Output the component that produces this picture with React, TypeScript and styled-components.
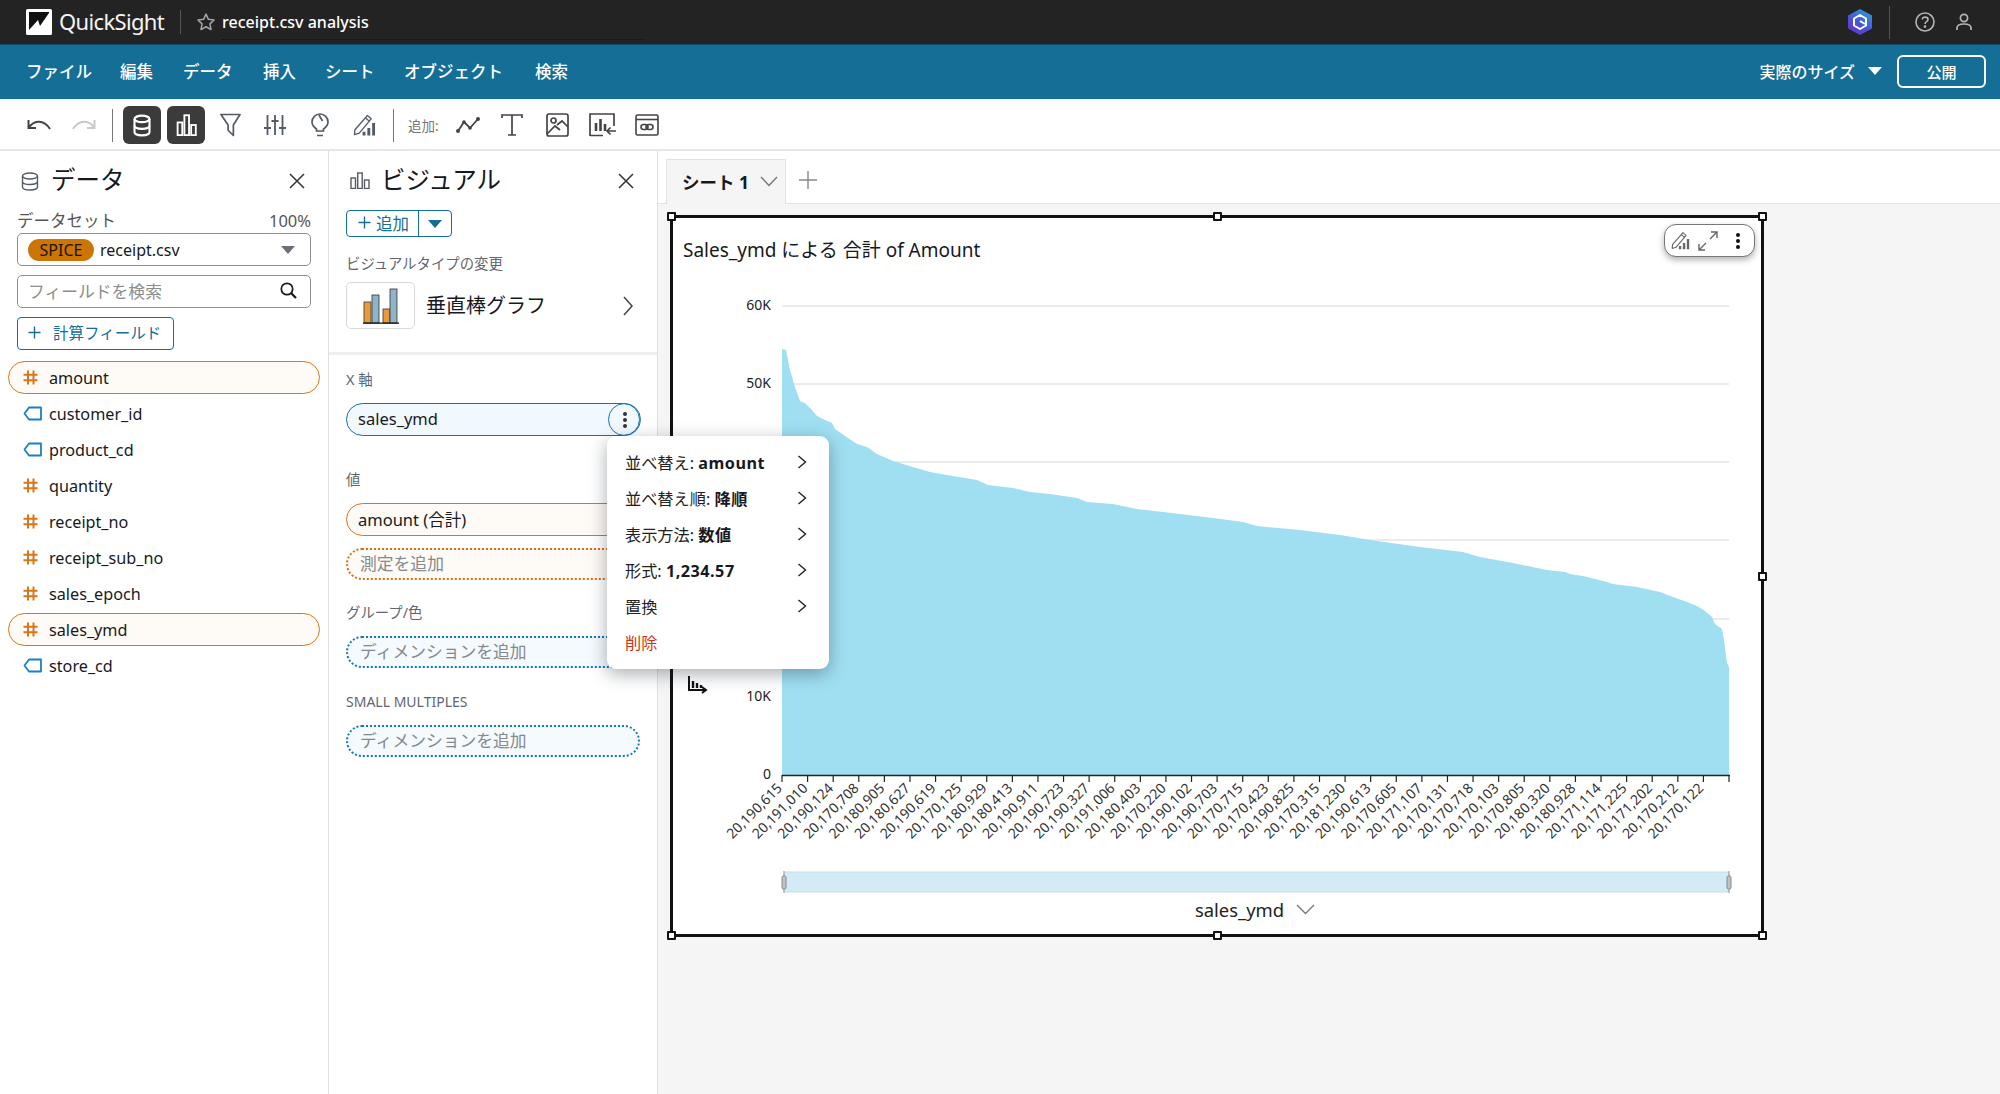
import styled, { createGlobalStyle } from 'styled-components'

const GlobalStyle = createGlobalStyle`
    html, body {
        margin: 0;
        padding: 0;
        height: 100%;
        background: #fff;
    }
    * {
        box-sizing: border-box;
    }
    body {
        font-family: "Noto Sans", "Noto Sans CJK JP", sans-serif;
        color: #16191f;
        overflow: hidden;
    }
`

const PageWrapper = styled.div`
    display: flex;
    flex-direction: column;
    width: 2000px;
    height: 1094px;
    overflow: hidden;
`

/* top black bar */
const TopBar = styled.div`
    display: flex;
    align-items: center;
    height: 45px;
    flex: none;
    padding-left: 26px;
    background: #232323;
    border-bottom: 1px solid #0f4f6d;
    color: #fff;
`

const Brand = styled.span`
    margin-left: 7px;
    padding-bottom: 2px;
    font-size: 22px;
    letter-spacing: -0.65px;
    color: #f4f4f4;
`

const TopDivider = styled.span`
    width: 1px;
    height: ${({ $h }: { $h: number }) => $h}px;
    background: #555;
`

const AnalysisName = styled.div`
    display: flex;
    align-items: center;
    width: 422px;
    height: 36px;
    margin: 0 0 0 6px;
    border-bottom: 1px dotted #111;
    font-size: 16px;
    font-weight: 500;
`

const TopRight = styled.div`
    display: flex;
    align-items: center;
    margin-left: auto;
    padding-right: 28px;
`

/* blue menu bar */
const MenuBar = styled.div`
    display: flex;
    align-items: center;
    height: 54px;
    flex: none;
    padding: 0 14px 2px 26px;
    background: #146e96;
    color: #fff;
`

const MenuItem = styled.span`
    width: ${({ $w }: { $w: number }) => $w}px;
    font-size: 16.5px;
    font-weight: 500;
`

const SizeSelect = styled.div`
    display: flex;
    align-items: center;
    margin-left: auto;
    font-size: 16px;
    font-weight: 500;
`

const Caret = styled.span`
    width: 0;
    height: 0;
    margin-left: ${({ $ml }: { $ml?: number }) => $ml ?? 0}px;
    border-left: 7px solid transparent;
    border-right: 7px solid transparent;
    border-top: 8px solid ${({ color }) => color || '#fff'};
`

const PublishButton = styled.button`
    width: 89px;
    height: 33px;
    margin-left: 15px;
    border: 2px solid #fff;
    border-radius: 6px;
    background: transparent;
    color: #fff;
    font: 500 15px "Noto Sans", "Noto Sans CJK JP", sans-serif;
`

/* icon toolbar */
const ToolBar = styled.div`
    display: flex;
    align-items: center;
    height: 52px;
    flex: none;
    padding: 2px 0 0 27px;
    border-bottom: 2px solid #e6e6e6;
    color: #545b64;
`

const ToolSlot = styled.span`
    display: flex;
    align-items: center;
    justify-content: center;
    width: ${({ $w }: { $w: number }) => $w}px;
    height: 24px;
    margin-left: ${({ $ml }: { $ml?: number }) => $ml ?? 0}px;
`

const ToolSep = styled.span`
    width: 1px;
    height: 33px;
    background: #777;
    margin-left: ${({ $ml }: { $ml: number }) => $ml}px;
`

const ActiveTool = styled.span`
    display: flex;
    align-items: center;
    justify-content: center;
    width: 38px;
    height: 38px;
    margin-left: ${({ $ml }: { $ml: number }) => $ml}px;
    border-radius: 6px;
    background: #3b3b3b;
    color: #fff;
`

const AddLabel = styled.span`
    width: 33px;
    margin-left: 14px;
    font-size: 13.5px;
    color: #777;
    white-space: nowrap;
`

/* panels */
const Workspace = styled.div`
    display: flex;
    flex: 1;
    min-height: 0;
`

const Panel = styled.div`
    width: 329px;
    flex: none;
    border-right: 1px solid #e0e0e0;
`

const PanelHeader = styled.div`
    display: flex;
    align-items: center;
    height: ${({ $h }: { $h: number }) => $h}px;
    padding: 0 0 0 ${({ $pl }: { $pl: number }) => $pl}px;
`

const PanelTitle = styled.span`
    margin-left: ${({ $ml }: { $ml: number }) => $ml}px;
    padding-bottom: 2px;
    font-size: 24.5px;
    line-height: 30px;
    color: #16191f;
`

const CloseIcon = styled.svg`
    margin-left: auto;
    margin-right: ${({ $mr }: { $mr: number }) => $mr}px;
    flex: none;
`

const DataBody = styled.div`
    padding: 0 17px;
`

const DatasetRow = styled.div`
    display: flex;
    justify-content: space-between;
    height: 22px;
    font-size: 16.5px;
    line-height: 20px;
    color: #555;
`

const Select = styled.div`
    display: flex;
    align-items: center;
    height: 33px;
    padding: 0 15px 0 10px;
    border: 1.5px solid #8f8f8f;
    border-radius: 5px;
    font-size: 16px;
`

const SpiceBadge = styled.span`
    display: flex;
    align-items: center;
    justify-content: center;
    width: 66px;
    height: 22px;
    margin-right: 6px;
    border-radius: 11px;
    background: #cc7504;
    color: #1a1205;
    font-size: 16px;
`

const SearchBox = styled.div`
    display: flex;
    align-items: center;
    justify-content: space-between;
    height: 33px;
    margin-top: 9px;
    padding: 0 13px 2px 10px;
    border: 1.5px solid #8f8f8f;
    border-radius: 5px;
    color: #8d8d8d;
    font-size: 16.8px;
`

const CalcButton = styled.div`
    display: flex;
    align-items: center;
    width: 157px;
    height: 33px;
    margin-top: 9px;
    padding: 0 0 2px 10px;
    border: 1.5px solid #146e96;
    border-radius: 4px;
    color: #146e96;
    font-size: 15.5px;
`

const FieldList = styled.div`
    margin-top: 11px;
    padding: 0 8px;
`

const Field = styled.div<{ $selected?: boolean }>`
    display: flex;
    align-items: center;
    height: 33px;
    margin-bottom: 3px;
    padding-left: 14px;
    border: 1.5px solid ${({ $selected }) => ($selected ? '#d5771a' : 'transparent')};
    border-radius: 17px;
    background: ${({ $selected }) => ($selected ? '#fefaf5' : 'transparent')};
    font-size: 16.2px;
`

const FieldName = styled.span<{ $tag?: boolean }>`
    margin-left: ${({ $tag }) => ($tag ? 7 : 11)}px;
`

const VisualBody = styled.div`
    padding: 0 17px;
`

const AddButton = styled.div`
    display: flex;
    align-items: center;
    width: 106px;
    height: 27px;
    border: 1.5px solid #146e96;
    border-radius: 4px;
    color: #146e96;
    font-size: 16.5px;
`

const AddButtonText = styled.span`
    display: flex;
    align-items: center;
    gap: 5px;
    width: 72px;
    height: 100%;
    padding: 0 0 2px 11px;
    border-right: 1.5px solid #146e96;
`

const AddButtonCaret = styled.span`
    display: flex;
    flex: 1;
    justify-content: center;
`

const SmallLabel = styled.div<{ $top: number; $latin?: boolean }>`
    height: 18px;
    margin-top: ${({ $top }) => $top}px;
    font-size: ${({ $latin }) => ($latin ? 14 : 14.4)}px;
    line-height: 17px;
    color: #5f6670;
`

const TypeRow = styled.div`
    display: flex;
    align-items: center;
    height: 47px;
    margin-top: 9px;
    margin-bottom: 23px;
    padding-right: 6px;
    font-size: 20px;
`

const TypeName = styled.span`
    padding-bottom: 2px;
`

const TypeThumb = styled.div`
    display: flex;
    align-items: center;
    justify-content: center;
    width: 69px;
    height: 47px;
    margin-right: 11px;
    border: 1px solid #d5dbdb;
    border-radius: 5px;
`

const TypeChevron = styled.svg`
    margin-left: auto;
`

const SectionDivider = styled.div`
    height: 3px;
    background: #eeeeee;
`

const WellBody = styled.div`
    padding: 16px 17px 0;
`

const Well = styled.div<{ $tone: 'blue' | 'orange' }>`
    display: flex;
    align-items: center;
    width: 294px;
    height: 33px;
    margin-top: 14px;
    padding: 0 0 2px 11px;
    border: 1.5px solid ${({ $tone }) => ($tone === 'blue' ? '#146eb4' : '#d5771a')};
    border-radius: 17px;
    background: ${({ $tone }) => ($tone === 'blue' ? '#f2f9fe' : '#fefaf5')};
    font-size: 16.5px;
`

const KebabRound = styled.span`
    display: flex;
    align-items: center;
    justify-content: center;
    width: 33px;
    height: 33px;
    margin: 2px -2px 0 auto;
    border: 1.5px solid #146eb4;
    border-radius: 50%;
`

const DropWell = styled.div<{ $tone: 'blue' | 'orange'; $top: number }>`
    display: flex;
    align-items: center;
    width: 294px;
    height: 32px;
    margin-top: ${({ $top }) => $top}px;
    padding: 0 0 3px 12px;
    border: 2px dotted ${({ $tone }) => ($tone === 'blue' ? '#1577bd' : '#d9701a')};
    border-radius: 17px;
    background: ${({ $tone }) => ($tone === 'blue' ? '#f4fafe' : '#fefaf5')};
    color: #85888c;
    font-size: 16.8px;
`

/* context menu opened from the kebab */
const WellMenu = styled.div`
    position: absolute;
    left: 607px;
    top: 436px;
    z-index: 5;
    width: 222px;
    height: 233px;
    padding: 8px 0 0 18px;
    border-radius: 9px;
    background: #fff;
    box-shadow: 0 5px 18px rgba(30, 40, 50, 0.38);
`

const WellMenuRow = styled.div<{ $danger?: boolean }>`
    display: flex;
    align-items: center;
    height: 36px;
    padding-right: 22px;
    font-size: 16.2px;
    color: ${({ $danger }) => ($danger ? '#d13212' : '#222')};
    b {
        font-weight: 700;
        letter-spacing: 0.5px;
        color: #16191f;
    }
`

const MenuChevron = styled.svg`
    margin-left: auto;
`

/* sheet area */
const Main = styled.div`
    display: flex;
    flex-direction: column;
    flex: 1;
    min-width: 0;
`

const TabRow = styled.div`
    display: flex;
    align-items: flex-end;
    height: 53px;
    flex: none;
    padding-left: 8px;
    border-bottom: 1px solid #e2e2e2;
`

const Tab = styled.div`
    display: flex;
    align-items: center;
    width: 120px;
    height: 45px;
    margin-bottom: -1px;
    padding: 0 0 2px 15px;
    border: 1px solid #e2e2e2;
    border-bottom: none;
    background: #f5f5f5;
    font-size: 17.5px;
    font-weight: 700;
    white-space: nowrap;
`

const TabChevron = styled.svg`
    margin-left: 11px;
    flex: none;
`

const TabPlus = styled.svg`
    margin: 0 0 14px 13px;
`

const Canvas = styled.div`
    flex: 1;
    padding: 11px 0 0 12px;
    background: #f5f5f5;
`

const VisualBox = styled.div`
    position: relative;
    width: 1094px;
    height: 722px;
    border: 3px solid #111;
    background: #fff;
`

const VisualTitle = styled.div`
    height: 44px;
    padding: 20px 0 0 10px;
    font-size: 19px;
    line-height: 24px;
    color: #16191f;
`

const ChartSvg = styled.svg`
    display: block;
`

const AxisTitle = styled.div`
    display: flex;
    align-items: center;
    justify-content: center;
    gap: 12px;
    height: 27px;
    padding: 0 33px 0 109px;
    font-size: 18.4px;
    color: #222;
`

const Handle = styled.span<{ $x: string; $y: string }>`
    position: absolute;
    left: ${({ $x }) => $x};
    top: ${({ $y }) => $y};
    width: 9px;
    height: 9px;
    margin: -4.5px 0 0 -4.5px;
    border: 2px solid #111;
    border-radius: 1px;
    background: #fff;
`

const FloatBar = styled.div`
    position: absolute;
    top: 6px;
    right: 6px;
    display: flex;
    align-items: center;
    width: 91px;
    height: 33px;
    padding-left: 6px;
    border: 1px solid #777;
    border-radius: 12px;
    background: #fff;
    box-shadow: 0 3px 6px rgba(0, 0, 0, 0.3);
    color: #666;
`

const ExpandIcon = styled.svg`
    margin-left: 8px;
`

const FloatKebab = styled.span`
    display: flex;
    margin-left: 17px;
`

const StarIcon = styled.svg`
    margin-left: 15px;
`

const BrandDivider = styled(TopDivider)`
    margin-left: 16px;
`

const RightDivider = styled(TopDivider)`
    margin: 0 25px 0 16px;
`

const UserIcon = styled.svg`
    margin-left: 21px;
`

const CalcPlus = styled.svg`
    margin-right: 12px;
`

const SelectCaret = styled(Caret)`
    margin-left: auto;
`

const ChartEditIcon = ({ size = 24 }: { size?: number }) => (
    <svg width={size} height={size} viewBox="0 0 24 24" fill="none" stroke="currentColor" strokeWidth="1.4">
        <path d="M2 17 L1.5 22 L6.5 20.5 L17 8 L13 4.5 Z M13 4.5 L15 2 L19 5.5 L17 8" strokeLinejoin="round" />
        <path d="M10 23v-4h3v4zM15 23V15h3v8zM20 23V10h3v13z" fill="currentColor" stroke="none" />
    </svg>
)

const KebabDots = ({ color = '#333', h = 18 }: { color?: string; h?: number }) => (
    <svg width="6" height={h} viewBox="0 0 6 18" fill={color}>
        <circle cx="3" cy="3" r="2" />
        <circle cx="3" cy="9" r="2" />
        <circle cx="3" cy="15" r="2" />
    </svg>
)

const Close = ({ mr }: { mr: number }) => (
    <CloseIcon $mr={mr} width="16" height="16" viewBox="0 0 16 16" stroke="#333" strokeWidth="1.5">
        <path d="M1 1L15 15M15 1L1 15" />
    </CloseIcon>
)

const HashIcon = () => (
    <svg width="15" height="15" viewBox="0 0 15 15" stroke="#d5771a" strokeWidth="2" fill="none">
        <path d="M5 0.5V14.5M10.5 0.5V14.5M0.5 4.8H14.5M0.5 10.2H14.5" />
    </svg>
)

const TagIcon = () => (
    <svg width="19" height="15" viewBox="0 0 19 15" stroke="#1b7fc4" strokeWidth="1.8" fill="none">
        <path d="M18 1.5H6L1.5 7.5L6 13.5H18Z" strokeLinejoin="round" />
    </svg>
)

const Chevron = () => (
    <MenuChevron width="10" height="14" viewBox="0 0 10 14" fill="none" stroke="#222" strokeWidth="1.4">
        <path d="M1.5 1L8.5 7L1.5 13" />
    </MenuChevron>
)

const AREA: [number, number][] = [
    [782, 349], [786, 350], [790, 370], [795, 387], [800, 401], [805, 403], [812, 410], [817, 416], [823, 419],
    [832, 423], [835, 429], [845, 436], [857, 444], [867, 447], [877, 454], [893, 461], [913, 467], [930, 472],
    [953, 476], [977, 480], [988, 485], [1013, 488], [1030, 492], [1050, 494], [1077, 498], [1087, 502], [1113, 504],
    [1137, 509], [1163, 512], [1180, 514], [1213, 518], [1243, 522], [1257, 526], [1300, 530], [1340, 535], [1370, 540],
    [1420, 547], [1463, 552], [1480, 557], [1513, 563], [1547, 570], [1565, 572], [1570, 574], [1583, 576], [1607, 582],
    [1613, 584], [1637, 587], [1660, 592], [1673, 597], [1687, 602], [1697, 606], [1705, 611], [1712, 617], [1715, 624],
    [1722, 629], [1724, 640], [1727, 663], [1729, 667], [1729, 775], [782, 775],
]

const DATES = [
    '20,190,615', '20,191,010', '20,190,124', '20,170,708', '20,180,905', '20,180,627', '20,190,619', '20,170,125',
    '20,180,929', '20,180,413', '20,190,911', '20,190,723', '20,190,327', '20,191,006', '20,180,403', '20,170,220',
    '20,190,102', '20,190,703', '20,170,715', '20,170,423', '20,190,825', '20,170,315', '20,181,230', '20,190,613',
    '20,170,605', '20,171,107', '20,170,131', '20,170,718', '20,170,103', '20,170,805', '20,180,320', '20,180,928',
    '20,171,114', '20,171,225', '20,171,202', '20,170,212', '20,170,122',
]

const GRID = [
    { y: 306, label: '60K' },
    { y: 384, label: '50K' },
    { y: 462, label: '40K' },
    { y: 540, label: '30K' },
    { y: 619, label: '20K' },
    { y: 697, label: '10K' },
    { y: 775, label: '0' },
]

const TICK = (1729 - 782) / 37

const SalesChart = () => (
    <ChartSvg width="1088" height="634" viewBox="673 262 1088 634" fontFamily='"Noto Sans", sans-serif'>
        {GRID.slice(0, 6).map((g) => (
            <line key={g.y} x1="782" x2="1729" y1={g.y} y2={g.y} stroke="#e4e4e4" strokeWidth="1.5" />
        ))}
        {GRID.map((g) => (
            <text key={g.label} x="771" y={g.y + 4} textAnchor="end" fontSize="14" fill="#222">
                {g.label}
            </text>
        ))}
        <polygon points={AREA.map((p) => p.join(',')).join(' ')} fill="#a0dff2" />
        <line x1="782" x2="1730" y1="775.5" y2="775.5" stroke="#222" strokeWidth="1.5" />
        {DATES.map((d, i) => {
            const x = 782 + i * TICK
            return (
                <g key={i}>
                    <line x1={x} x2={x} y1="775" y2="782" stroke="#222" strokeWidth="1.2" />
                    <text
                        transform={`translate(${x + 1} 789) rotate(-45)`}
                        textAnchor="end"
                        fontSize="14"
                        fill="#333"
                    >
                        {d}
                    </text>
                </g>
            )
        })}
        <line x1="1729" x2="1729" y1="775" y2="782" stroke="#222" strokeWidth="1.2" />
        <rect x="784" y="872" width="945" height="20" fill="#d2ebf7" stroke="#c7dfe9" />
        {[784, 1729].map((x) => (
            <g key={x}>
                <line x1={x} x2={x} y1="871" y2="893" stroke="#999" />
                <rect x={x - 2} y="876" width="4" height="13" rx="1.5" fill="#bcc4c8" stroke="#888" />
            </g>
        ))}
        <g stroke="#111" strokeWidth="2" fill="none">
            <path d="M689 676V690H705M702 687L706 690L702 693" />
            <path d="M693 681V688M697 683V688M701 685V688" strokeWidth="2.4" />
        </g>
    </ChartSvg>
)

const App = () => {
    return (
        <PageWrapper>
            <GlobalStyle />
            <TopBar>
                <svg width="26" height="26" viewBox="0 0 26 26">
                    <rect width="26" height="26" rx="1.5" fill="#fff" />
                    <path d="M3 3H23V4L14 17L12 11L3 21Z" fill="#111" />
                </svg>
                <Brand>QuickSight</Brand>
                <BrandDivider $h={24} />
                <StarIcon width="20" height="20" viewBox="0 0 24 24" fill="none" stroke="#a5a5a5" strokeWidth="1.8">
                    <path d="M12 2.5l2.9 6.3 6.8.8-5 4.7 1.3 6.8-6-3.4-6 3.4 1.3-6.8-5-4.7 6.8-.8z" strokeLinejoin="round" />
                </StarIcon>
                <AnalysisName>receipt.csv analysis</AnalysisName>
                <TopRight>
                    <svg width="26" height="28" viewBox="0 0 26 28" fill="none">
                        <defs>
                            <linearGradient id="hexFill" x1="0.8" y1="0" x2="0.2" y2="1">
                                <stop offset="0" stopColor="#2a9ed8" />
                                <stop offset="0.55" stopColor="#4a55d8" />
                                <stop offset="1" stopColor="#6a2fc8" />
                            </linearGradient>
                        </defs>
                        <path d="M13 1L25 7.5V20.5L13 27L1 20.5V7.5Z" fill="url(#hexFill)" />
                        <path d="M13 7L19 10.5V17.5L13 21L7 17.5V10.5Z" stroke="#fff" strokeWidth="2" strokeLinejoin="round" />
                        <path d="M13 13L18 16" stroke="#fff" strokeWidth="2" />
                    </svg>
                    <RightDivider $h={33} />
                    <svg width="20" height="20" viewBox="0 0 20 20" fill="none" stroke="#b5b5b5" strokeWidth="1.6">
                        <circle cx="10" cy="10" r="9" />
                        <path d="M7.3 7.6C7.3 4.2 13 4.4 13 7.6C13 9.8 10 9.6 10 12" />
                        <circle cx="10" cy="14.6" r="0.6" fill="#b5b5b5" />
                    </svg>
                    <UserIcon width="16" height="18" viewBox="0 0 16 18" fill="none" stroke="#b5b5b5" strokeWidth="1.7">
                        <circle cx="8" cy="5" r="3.6" />
                        <path d="M1 17V15C1 12 3.5 11 8 11C12.5 11 15 12 15 15V17" />
                    </UserIcon>
                </TopRight>
            </TopBar>

            <MenuBar>
                <MenuItem $w={94}>ファイル</MenuItem>
                <MenuItem $w={63}>編集</MenuItem>
                <MenuItem $w={80}>データ</MenuItem>
                <MenuItem $w={62}>挿入</MenuItem>
                <MenuItem $w={79}>シート</MenuItem>
                <MenuItem $w={131}>オブジェクト</MenuItem>
                <MenuItem $w={40}>検索</MenuItem>
                <SizeSelect>
                    実際のサイズ
                    <Caret $ml={13} />
                </SizeSelect>
                <PublishButton>公開</PublishButton>
            </MenuBar>

            <ToolBar>
                <ToolSlot $w={24}>
                    <svg width="24" height="14" viewBox="0 0 24 14" fill="none" stroke="#444" strokeWidth="2">
                        <path d="M1.5 2V10H9M1.5 10C6 3 16 0 23 11" />
                    </svg>
                </ToolSlot>
                <ToolSlot $w={24} $ml={21}>
                    <svg width="24" height="14" viewBox="0 0 24 14" fill="none" stroke="#c9c9c9" strokeWidth="2">
                        <path d="M22.5 2V10H15M22.5 10C18 3 8 0 1 11" />
                    </svg>
                </ToolSlot>
                <ToolSep $ml={16} />
                <ActiveTool $ml={10}>
                    <svg width="18" height="23" viewBox="0 0 24 28" fill="none" stroke="#fff" strokeWidth="2.8" preserveAspectRatio="none">
                        <ellipse cx="12" cy="6" rx="10" ry="4" />
                        <path d="M2 6V22C2 24.5 6.5 26 12 26C17.5 26 22 24.5 22 22V6" />
                        <path d="M2 14C2 16.5 6.5 18 12 18C17.5 18 22 16.5 22 14" />
                    </svg>
                </ActiveTool>
                <ActiveTool $ml={6}>
                    <svg width="23" height="22" viewBox="0 0 24 26" fill="none" stroke="#fff" strokeWidth="2.2">
                        <rect x="1.5" y="10" width="5.5" height="15" />
                        <rect x="9.5" y="1.5" width="5.5" height="23.5" />
                        <rect x="17.5" y="13" width="5.5" height="12" />
                    </svg>
                </ActiveTool>
                <ToolSlot $w={21} $ml={15}>
                    <svg width="22" height="24" viewBox="0 0 22 24" fill="none" stroke="#545b64" strokeWidth="1.8">
                        <path d="M1 1H21L14 12V23L8.5 17.5V12Z" strokeLinejoin="round" />
                    </svg>
                </ToolSlot>
                <ToolSlot $w={22} $ml={23}>
                    <svg width="22" height="20" viewBox="0 0 22 20" fill="none" stroke="#545b64" strokeWidth="1.8">
                        <path d="M3.5 0V20M11 0V20M18.5 0V20M0 13H7M7.5 6H14.5M15 13H22" />
                    </svg>
                </ToolSlot>
                <ToolSlot $w={18} $ml={25}>
                    <svg width="18" height="24" viewBox="0 0 18 24" fill="none" stroke="#545b64" strokeWidth="1.7">
                        <path d="M5.5 18V16C2.5 14 1 11.5 1 9C1 4.5 4.5 1 9 1C13.5 1 17 4.5 17 9C17 11.5 15.5 14 12.5 16V18ZM6 22.5H12M8 2L11.5 8" />
                    </svg>
                </ToolSlot>
                <ToolSlot $w={23} $ml={24}>
                    <ChartEditIcon />
                </ToolSlot>
                <ToolSep $ml={17} />
                <AddLabel>追加:</AddLabel>
                <ToolSlot $w={24} $ml={15}>
                    <svg width="24" height="16" viewBox="0 0 24 16" fill="none" stroke="#444" strokeWidth="1.8">
                        <path d="M2 14L8 5L14 11L22 2" />
                        <g fill="#444" stroke="none">
                            <circle cx="2" cy="14" r="2" />
                            <circle cx="8" cy="5" r="1.8" />
                            <circle cx="14" cy="11" r="1.8" />
                            <circle cx="22" cy="2" r="2" />
                        </g>
                    </svg>
                </ToolSlot>
                <ToolSlot $w={22} $ml={21}>
                    <svg width="22" height="22" viewBox="0 0 22 22" fill="none" stroke="#444" strokeWidth="1.7">
                        <path d="M1 4V1H21V4M11 1V21M7 21H15" />
                    </svg>
                </ToolSlot>
                <ToolSlot $w={24} $ml={22}>
                    <svg width="23" height="24" viewBox="0 0 23 24" fill="none" stroke="#444" strokeWidth="1.7">
                        <rect x="1" y="1" width="21" height="22" rx="2" />
                        <circle cx="7.5" cy="7.5" r="2.5" />
                        <path d="M1 21L9 13L14 17M11 12L16 8L22 14" />
                    </svg>
                </ToolSlot>
                <ToolSlot $w={27} $ml={20}>
                    <svg width="27" height="24" viewBox="0 0 27 24" fill="none" stroke="#444" strokeWidth="1.7">
                        <path d="M1 23V1H25V13M1 22.5H14" />
                        <path d="M7 18V10M11.5 18V6M16 18V11" strokeWidth="2.6" />
                        <path d="M27 18H18M21.5 14.5L18 18L21.5 21.5" />
                    </svg>
                </ToolSlot>
                <ToolSlot $w={24} $ml={19}>
                    <svg width="24" height="22" viewBox="0 0 24 22" fill="none" stroke="#444" strokeWidth="1.6">
                        <rect x="1" y="1" width="22" height="20" rx="1.5" />
                        <path d="M1 5.5H23" />
                        <rect x="6" y="10.5" width="7" height="5" rx="2.5" />
                        <rect x="11" y="10.5" width="7" height="5" rx="2.5" />
                    </svg>
                </ToolSlot>
            </ToolBar>

            <Workspace>
                <Panel>
                    <PanelHeader $h={60} $pl={21}>
                        <svg width="18" height="19" viewBox="0 0 18 19" fill="none" stroke="#545b64" strokeWidth="1.4">
                            <ellipse cx="9" cy="4" rx="7.5" ry="3" />
                            <path d="M1.5 4V15C1.5 16.7 4.8 18 9 18C13.2 18 16.5 16.7 16.5 15V4M1.5 9.5C1.5 11.2 4.8 12.5 9 12.5C13.2 12.5 16.5 11.2 16.5 9.5" />
                        </svg>
                        <PanelTitle $ml={12}>データ</PanelTitle>
                        <Close mr={23} />
                    </PanelHeader>
                    <DataBody>
                        <DatasetRow>
                            <span>データセット</span>
                            <span>100%</span>
                        </DatasetRow>
                        <Select>
                            <SpiceBadge>SPICE</SpiceBadge>
                            receipt.csv
                            <SelectCaret color="#6b7078" />
                        </Select>
                        <SearchBox>
                            フィールドを検索
                            <svg width="17" height="17" viewBox="0 0 17 17" fill="none" stroke="#16191f" strokeWidth="1.7">
                                <circle cx="7" cy="7" r="5.7" />
                                <path d="M11 11L16 16" strokeWidth="2.2" />
                            </svg>
                        </SearchBox>
                        <CalcButton>
                            <CalcPlus width="13" height="13" viewBox="0 0 13 13" stroke="#146e96" strokeWidth="1.4">
                                <path d="M6.5 0.5V12.5M0.5 6.5H12.5" />
                            </CalcPlus>
                            計算フィールド
                        </CalcButton>
                    </DataBody>
                    <FieldList>
                        <Field $selected>
                            <HashIcon />
                            <FieldName>amount</FieldName>
                        </Field>
                        <Field>
                            <TagIcon />
                            <FieldName $tag>customer_id</FieldName>
                        </Field>
                        <Field>
                            <TagIcon />
                            <FieldName $tag>product_cd</FieldName>
                        </Field>
                        <Field>
                            <HashIcon />
                            <FieldName>quantity</FieldName>
                        </Field>
                        <Field>
                            <HashIcon />
                            <FieldName>receipt_no</FieldName>
                        </Field>
                        <Field>
                            <HashIcon />
                            <FieldName>receipt_sub_no</FieldName>
                        </Field>
                        <Field>
                            <HashIcon />
                            <FieldName>sales_epoch</FieldName>
                        </Field>
                        <Field $selected>
                            <HashIcon />
                            <FieldName>sales_ymd</FieldName>
                        </Field>
                        <Field>
                            <TagIcon />
                            <FieldName $tag>store_cd</FieldName>
                        </Field>
                    </FieldList>
                </Panel>

                <Panel>
                    <PanelHeader $h={59} $pl={21}>
                        <svg width="20" height="17" viewBox="0 0 20 17" fill="none" stroke="#545b64" strokeWidth="1.4">
                            <rect x="1" y="6" width="4.5" height="10.5" />
                            <rect x="7.7" y="1" width="4.5" height="15.5" />
                            <rect x="14.5" y="8" width="4.5" height="8.5" />
                        </svg>
                        <PanelTitle $ml={11}>ビジュアル</PanelTitle>
                        <Close mr={23} />
                    </PanelHeader>
                    <VisualBody>
                        <AddButton>
                            <AddButtonText>
                                <svg width="13" height="13" viewBox="0 0 13 13" stroke="#146e96" strokeWidth="1.4">
                                    <path d="M6.5 0.5V12.5M0.5 6.5H12.5" />
                                </svg>
                                追加
                            </AddButtonText>
                            <AddButtonCaret>
                                <Caret color="#146e96" />
                            </AddButtonCaret>
                        </AddButton>
                        <SmallLabel $top={18}>ビジュアルタイプの変更</SmallLabel>
                        <TypeRow>
                            <TypeThumb>
                                <svg width="36" height="36" viewBox="0 0 36 36">
                                    <rect x="1" y="14" width="7" height="21" fill="#e89a3c" stroke="#333" strokeWidth="0.8" />
                                    <rect x="9" y="7" width="7" height="28" fill="#8fb3c9" stroke="#333" strokeWidth="0.8" />
                                    <rect x="20" y="21" width="7" height="14" fill="#e89a3c" stroke="#333" strokeWidth="0.8" />
                                    <rect x="27" y="1" width="7" height="34" fill="#8fb3c9" stroke="#333" strokeWidth="0.8" />
                                    <path d="M0 35.2H36" stroke="#111" strokeWidth="1.2" />
                                </svg>
                            </TypeThumb>
                            <TypeName>垂直棒グラフ</TypeName>
                            <TypeChevron width="12" height="20" viewBox="0 0 12 20" fill="none" stroke="#444" strokeWidth="1.5">
                                <path d="M2 1L10 10L2 19" />
                            </TypeChevron>
                        </TypeRow>
                    </VisualBody>
                    <SectionDivider />
                    <WellBody>
                        <SmallLabel $top={0}>X 軸</SmallLabel>
                        <Well $tone="blue">
                            sales_ymd
                            <KebabRound>
                                <KebabDots />
                            </KebabRound>
                        </Well>
                        <SmallLabel $top={35}>値</SmallLabel>
                        <Well $tone="orange">amount (合計)</Well>
                        <DropWell $tone="orange" $top={12}>
                            測定を追加
                        </DropWell>
                        <SmallLabel $top={24}>グループ/色</SmallLabel>
                        <DropWell $tone="blue" $top={14}>
                            ディメンションを追加
                        </DropWell>
                        <SmallLabel $top={25} $latin>SMALL MULTIPLES</SmallLabel>
                        <DropWell $tone="blue" $top={14}>
                            ディメンションを追加
                        </DropWell>
                    </WellBody>
                </Panel>

                <Main>
                    <TabRow>
                        <Tab>
                            シート 1
                            <TabChevron width="18" height="11" viewBox="0 0 18 11" fill="none" stroke="#777" strokeWidth="1.4">
                                <path d="M1 1L9 9.5L17 1" />
                            </TabChevron>
                        </Tab>
                        <TabPlus width="18" height="18" viewBox="0 0 18 18" stroke="#888" strokeWidth="1.4">
                            <path d="M9 0V18M0 9H18" />
                        </TabPlus>
                    </TabRow>
                    <Canvas>
                        <VisualBox>
                            <VisualTitle>Sales_ymd による 合計 of Amount</VisualTitle>
                            <SalesChart />
                            <AxisTitle>
                                sales_ymd
                                <svg width="19" height="11" viewBox="0 0 19 11" fill="none" stroke="#777" strokeWidth="1.4">
                                    <path d="M1 1L9.5 9.5L18 1" />
                                </svg>
                            </AxisTitle>
                            <FloatBar>
                                <ChartEditIcon size={19} />
                                <ExpandIcon width="20" height="20" viewBox="0 0 20 20" fill="none" stroke="#666" strokeWidth="1.4">
                                    <path d="M12 8L19 1M13 1H19V7M8 12L1 19M1 13V19H7" />
                                </ExpandIcon>
                                <FloatKebab>
                                    <KebabDots color="#111" />
                                </FloatKebab>
                            </FloatBar>
                            <Handle $x="-1.5px" $y="-1.5px" />
                            <Handle $x="50%" $y="-1.5px" />
                            <Handle $x="calc(100% + 1.5px)" $y="-1.5px" />
                            <Handle $x="-1.5px" $y="calc(100% + 1.5px)" />
                            <Handle $x="50%" $y="calc(100% + 1.5px)" />
                            <Handle $x="calc(100% + 1.5px)" $y="calc(100% + 1.5px)" />
                            <Handle $x="calc(100% + 1.5px)" $y="50%" />
                        </VisualBox>
                    </Canvas>
                </Main>
            </Workspace>

            <WellMenu>
                <WellMenuRow>
                    <span>並べ替え: <b>amount</b></span>
                    <Chevron />
                </WellMenuRow>
                <WellMenuRow>
                    <span>並べ替え順: <b>降順</b></span>
                    <Chevron />
                </WellMenuRow>
                <WellMenuRow>
                    <span>表示方法: <b>数値</b></span>
                    <Chevron />
                </WellMenuRow>
                <WellMenuRow>
                    <span>形式: <b>1,234.57</b></span>
                    <Chevron />
                </WellMenuRow>
                <WellMenuRow>
                    <span>置換</span>
                    <Chevron />
                </WellMenuRow>
                <WellMenuRow $danger>削除</WellMenuRow>
            </WellMenu>
        </PageWrapper>
    )
}

export default App
